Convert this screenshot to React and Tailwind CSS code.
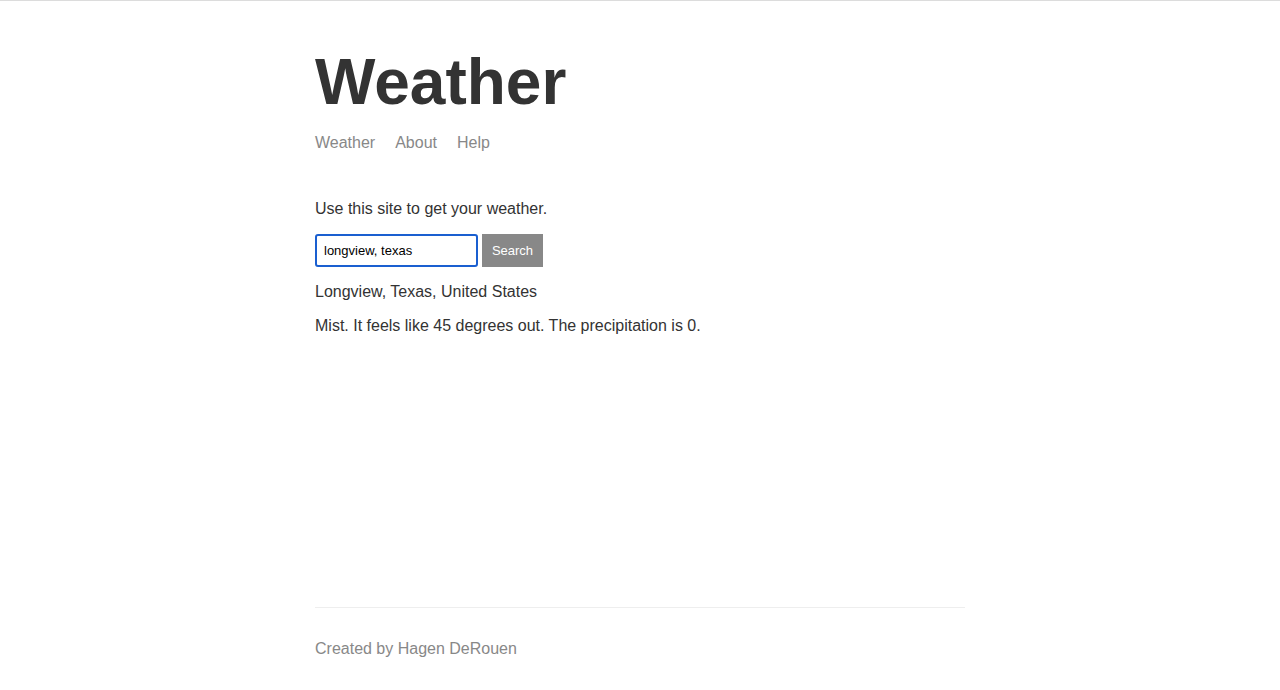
const App = () => {
  return (
    <div className="min-h-[690px] flex flex-col bg-white text-[#333333] font-['Liberation_Sans',Arial,sans-serif]">
      <div className="h-px bg-[#dcdcdc]"></div>
      <div className="w-[650px] mx-auto flex flex-col flex-1">
        <div className="flex-1">
          <header className="pt-[44px] mb-[48px]">
            <h1 className="text-[64px] font-bold leading-[74px] mb-[15px]">Weather</h1>
            <nav className="flex gap-[20px] text-base leading-[18px] text-[#888888]">
              <a href="#">Weather</a>
              <a href="#">About</a>
              <a href="#">Help</a>
            </nav>
          </header>
          <p className="text-base leading-[18px] mb-4">Use this site to get your weather.</p>
          <form className="flex gap-[4px] mb-4" onSubmit={(e) => e.preventDefault()}>
            <input
              className="w-[163px] h-[33px] border-2 border-[#1a5fd0] rounded-[3px] px-[7px] text-[13px] text-black outline-none"
              defaultValue="longview, texas"
            />
            <button className="w-[61px] h-[33px] bg-[#888888] border border-[#888888] text-white text-[13px]">
              Search
            </button>
          </form>
          <p className="text-base leading-[18px] mb-4">Longview, Texas, United States</p>
          <p className="text-base leading-[18px]">Mist. It feels like 45 degrees out. The precipitation is 0.</p>
        </div>
        <footer className="border-t border-[#eeeeee] mt-4 pt-8 pb-8 text-[#888888]">
          <p className="text-base leading-[18px]">Created by Hagen DeRouen</p>
        </footer>
      </div>
    </div>
  );
};

export default App;
